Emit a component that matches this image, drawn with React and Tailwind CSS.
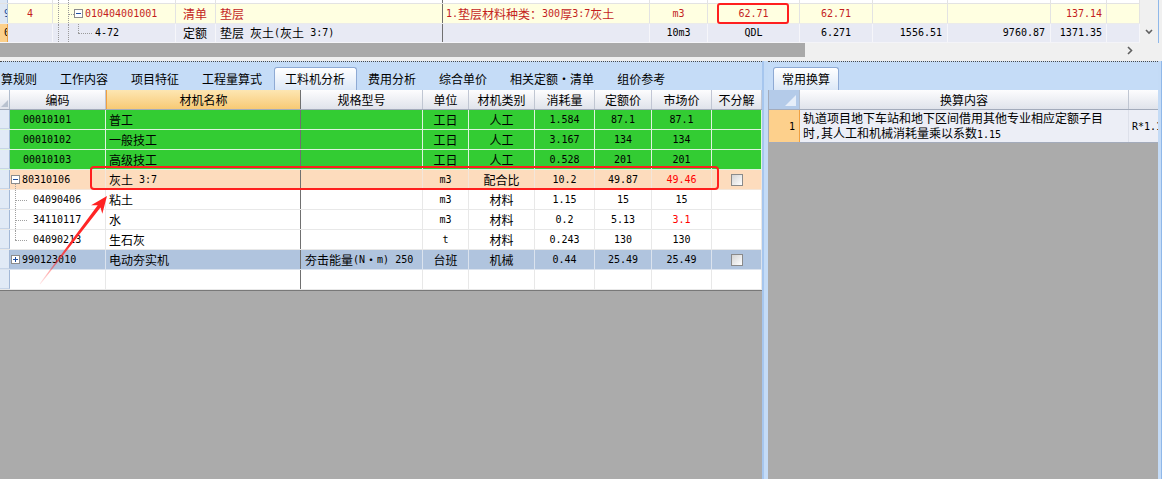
import React from "react";

const CN = "font-['Noto_Sans_CJK_SC',sans-serif] text-[12px]";
const MONO = "font-['DejaVu_Sans_Mono',monospace] text-[10px]";

function Mix({ text }) {
  const parts = text.split(/([\x20-\x7e]+)/).filter(Boolean);
  return parts.map((p, i) =>
    /^[\x20-\x7e]+$/.test(p) ? (
      <span key={i} className="font-['DejaVu_Sans_Mono',monospace] text-[10px] whitespace-pre">
        {p}
      </span>
    ) : (
      <span key={i} className="font-['Noto_Sans_CJK_SC',sans-serif] text-[12px]">
        {p}
      </span>
    )
  );
}

function C({ w, line = "border-[#e3e3e3]", className = "", children }) {
  return (
    <div
      className={`${w} ${line} ${className} shrink-0 h-full border-r flex items-center overflow-hidden whitespace-nowrap leading-none`}
    >
      {children}
    </div>
  );
}

function Box({ plus }) {
  return (
    <span className="relative inline-block shrink-0 w-[9px] h-[9px] border border-[#8c8c8c] bg-white">
      <span className="absolute left-[1px] right-[1px] top-[3px] h-[1px] bg-[#1f4f9f]" />
      {plus && <span className="absolute top-[1px] bottom-[1px] left-[3px] w-[1px] bg-[#1f4f9f]" />}
    </span>
  );
}

function Guides() {
  return (
    <>
      <span className="absolute left-[5px] top-0 bottom-0 border-l border-dotted border-[#9a9a9a]" />
      <span className="absolute left-[15px] top-0 bottom-0 border-l border-dotted border-[#9a9a9a]" />
    </>
  );
}

function Check() {
  return (
    <span className="inline-block w-[12px] h-[12px] border border-[#8a8a8a] bg-linear-to-br from-[#d4d4d4] to-white" />
  );
}

function TopGrid() {
  const red = "text-[#c41e1e]";
  return (
    <div className="h-[57px] flex flex-col">
      <div className="flex h-[43px]">
        <div className="w-[1140px] flex flex-col">
          {/* partial row above */}
          <div className="flex h-[4px] bg-white border-b border-[#e3e3e3]">
            <C w="w-[8px]" line="border-[#a9bfdc]" className="bg-[#dde7f4]" />
            <C w="w-[45px]" />
            <C w="w-[123px]" className="relative"><Guides /></C>
            <C w="w-[40px]" />
            <C w="w-[227px]" line="border-[#707070]" />
            <C w="w-[207px]" />
            <C w="w-[58px]" />
            <C w="w-[92px]" />
            <C w="w-[73px]" />
            <C w="w-[75px]" />
            <C w="w-[103px]" />
            <C w="w-[56px]" />
            <C w="w-[33px]" />
          </div>
          {/* 清单 row */}
          <div className="flex h-[20px] bg-[#ffffe1] border-b border-[#ebebeb]">
            <C w="w-[8px]" line="border-[#a9bfdc]" className={`bg-[#dde7f4] justify-end ${MONO} text-[#1a4f9a]`}>
              <span className="-mr-[3px]">9</span>
            </C>
            <C w="w-[45px]" className={`justify-center ${MONO} ${red}`}>4</C>
            <C w="w-[123px]" className="relative pl-[21px]">
              <Guides />
              <span className="absolute left-[15px] top-1/2 w-[6px] border-t border-dotted border-[#9a9a9a]" />
              <Box />
              <span className={`ml-[2px] ${MONO} ${red}`}>010404001001</span>
            </C>
            <C w="w-[40px]" className={`pl-[7px] ${CN} ${red}`}>清单</C>
            <C w="w-[227px]" line="border-[#707070]" className={`pl-[4px] ${CN} ${red}`}>垫层</C>
            <C w="w-[207px]" className={`pl-[3px] ${red}`}><Mix text="1.垫层材料种类：300厚3:7灰土" /></C>
            <C w="w-[58px]" className={`justify-center ${MONO} ${red}`}>m3</C>
            <C w="w-[92px]" className={`justify-center ${MONO} ${red}`}>62.71</C>
            <C w="w-[73px]" className={`justify-center ${MONO} ${red}`}>62.71</C>
            <C w="w-[75px]" />
            <C w="w-[103px]" />
            <C w="w-[56px]" className={`justify-end pr-[4px] ${MONO} ${red}`}>137.14</C>
            <C w="w-[33px]" />
          </div>
          {/* 定额 row */}
          <div className="flex h-[19px] bg-[#e8eaf4] border-b border-[#f4f4f8]">
            <C w="w-[8px]" line="border-[#e9a24a]" className={`bg-[#fcd08a] justify-end ${MONO}`}>
              <span className="-mr-[3px]">0</span>
            </C>
            <C w="w-[45px]" line="border-[#f6f6fa]" />
            <C w="w-[123px]" line="border-[#f6f6fa]" className="relative pl-[42px]">
              <Guides />
              <span className="absolute left-[25px] top-0 h-1/2 border-l border-dotted border-[#9a9a9a]" />
              <span className="absolute left-[25px] top-1/2 w-[14px] border-t border-dotted border-[#9a9a9a]" />
              <span className={MONO}>4-72</span>
            </C>
            <C w="w-[40px]" line="border-[#f6f6fa]" className={`pl-[7px] ${CN}`}>定额</C>
            <C w="w-[227px]" line="border-[#707070]" className="pl-[4px]"><Mix text="垫层 灰土(灰土 3:7)" /></C>
            <C w="w-[207px]" line="border-[#f6f6fa]" />
            <C w="w-[58px]" line="border-[#f6f6fa]" className={`justify-center ${MONO}`}>10m3</C>
            <C w="w-[92px]" line="border-[#f6f6fa]" className={`justify-center ${MONO}`}>QDL</C>
            <C w="w-[73px]" line="border-[#f6f6fa]" className={`justify-center ${MONO}`}>6.271</C>
            <C w="w-[75px]" line="border-[#f6f6fa]" className={`justify-end pr-[5px] ${MONO}`}>1556.51</C>
            <C w="w-[103px]" line="border-[#f6f6fa]" className={`justify-end pr-[5px] ${MONO}`}>9760.87</C>
            <C w="w-[56px]" line="border-[#f6f6fa]" className={`justify-end pr-[4px] ${MONO}`}>1371.35</C>
            <C w="w-[33px]" line="border-[#f6f6fa]" />
          </div>
        </div>
        <div className="w-[18px] bg-[#f0f0f0] flex items-end justify-center pb-[8px]">
          <svg width="8" height="6" viewBox="0 0 8 6">
            <path d="M1 1 L4 4 L7 1" fill="none" stroke="#606060" strokeWidth="1.6" />
          </svg>
        </div>
        <div className="w-[4px] bg-[#f0f0f0] border-l border-[#8fb8ea]" />
      </div>
      <div className="flex h-[14px]">
        <div className="w-[805px] bg-[#a9a9a9]" />
        <div className="w-[335px] bg-[#f0f0f0] flex items-center justify-end pr-[7px]">
          <svg width="6" height="9" viewBox="0 0 6 9">
            <path d="M1 1 L4.5 4.5 L1 8" fill="none" stroke="#606060" strokeWidth="1.6" />
          </svg>
        </div>
        <div className="w-[22px] bg-[#f0f0f0]" />
      </div>
    </div>
  );
}

const tabs = ["算规则", "工作内容", "项目特征", "工程量算式", "工料机分析", "费用分析", "综合单价", "相关定额·清单", "组价参考"];

const lw = ["w-[10px]", "w-[96px]", "w-[195px]", "w-[122px]", "w-[46px]", "w-[66px]", "w-[60px]", "w-[57px]", "w-[60px]", "w-[50px]"];

const rows = [
  { code: "00010101", name: "普工", unit: "工日", cat: "人工", qty: "1.584", price: "87.1", market: "87.1", bg: "green" },
  { code: "00010102", name: "一般技工", unit: "工日", cat: "人工", qty: "3.167", price: "134", market: "134", bg: "green" },
  { code: "00010103", name: "高级技工", unit: "工日", cat: "人工", qty: "0.528", price: "201", market: "201", bg: "green" },
  { code: "80310106", name: "灰土 3:7", unit: "m3", cat: "配合比", qty: "10.2", price: "49.87", market: "49.46", red: true, bg: "peach", tree: "minus", check: true },
  { code: "04090406", name: "粘土", unit: "m3", cat: "材料", qty: "1.15", price: "15", market: "15", bg: "white", tree: "child" },
  { code: "34110117", name: "水", unit: "m3", cat: "材料", qty: "0.2", price: "5.13", market: "3.1", red: true, bg: "white", tree: "child" },
  { code: "04090213", name: "生石灰", unit: "t", cat: "材料", qty: "0.243", price: "130", market: "130", bg: "white", tree: "last" },
  { code: "990123010", name: "电动夯实机", spec: "夯击能量(N·m) 250", unit: "台班", cat: "机械", qty: "0.44", price: "25.49", market: "25.49", bg: "steel", tree: "plus", check: true },
  { code: "", name: "", unit: "", cat: "", qty: "", price: "", market: "", bg: "white" },
];

const bgs = { green: "bg-[#33cc33]", peach: "bg-[#fddcbd]", steel: "bg-[#b0c4de]", white: "bg-white" };
const lines = { green: "border-[#dff3df]", peach: "border-[#f3e6da]", steel: "border-[#dbe3ee]", white: "border-[#e8e8e8]" };

function MatRow({ r }) {
  const line = lines[r.bg];
  return (
    <div className={`flex h-[20px] ${bgs[r.bg]} border-b ${line}`}>
      <C w={lw[0]} line="border-[#a3b8d6]" className="bg-[#e1eaf6] border-b border-b-[#c6d4e8]" />
      <C w={lw[1]} line={line} className={`relative ${MONO} ${r.tree === "child" || r.tree === "last" ? "pl-[23px]" : r.tree ? "pl-[1px]" : "pl-[13px]"}`}>
        {(r.tree === "child" || r.tree === "last") && (
          <>
            <span className={`absolute left-[5px] top-0 border-l border-dotted border-[#a0a0a0] ${r.tree === "last" ? "h-1/2" : "h-full"}`} />
            <span className="absolute left-[5px] top-1/2 w-[12px] border-t border-dotted border-[#a0a0a0]" />
          </>
        )}
        {r.tree === "minus" && <span className="absolute left-[5px] top-[14px] bottom-0 border-l border-dotted border-[#a0a0a0]" />}
        {r.tree === "minus" && <Box />}
        {r.tree === "plus" && <Box plus />}
        <span className={r.tree === "minus" || r.tree === "plus" ? "ml-[2px]" : ""}>{r.code}</span>
      </C>
      <C w={lw[2]} line="border-[#707070]" className="pl-[3px]">
        <Mix text={r.name} />
      </C>
      <C w={lw[3]} line={line} className="pl-[4px]">
        {r.spec && <Mix text={r.spec} />}
      </C>
      <C w={lw[4]} line={line} className="justify-center">
        <Mix text={r.unit} />
      </C>
      <C w={lw[5]} line={line} className={`justify-center ${CN}`}>{r.cat}</C>
      <C w={lw[6]} line={line} className={`justify-center ${MONO}`}>{r.qty}</C>
      <C w={lw[7]} line={line} className={`justify-center ${MONO}`}>{r.price}</C>
      <C w={lw[8]} line={line} className={`justify-center ${MONO} ${r.red ? "text-[#ff0000]" : ""}`}>{r.market}</C>
      <C w={lw[9]} line={line} className="justify-center">{r.check && <Check />}</C>
    </div>
  );
}

function LeftPanel() {
  const heads = ["编码", "材机名称", "规格型号", "单位", "材机类别", "消耗量", "定额价", "市场价", "不分解"];
  return (
    <div className="w-[762px] flex flex-col bg-[#ababab]">
      <div className="h-[29px] border-t border-dotted border-[#4a4a4a] bg-[#c5dcf7] flex items-end">
        {tabs.map((t, i) => (
          <div
            key={t}
            className={`h-[23px] flex items-center border border-b-0 rounded-t-[3px] ${CN} ${i === 0 ? "pl-0 pr-[10.5px]" : "px-[10.5px]"} ${
              i === 4 ? "border-[#8eaad4] bg-linear-to-b from-white to-[#dce8f7]" : "border-transparent"
            }`}
          >
            {t}
          </div>
        ))}
      </div>
      <div className="flex h-[20px] bg-linear-to-b from-[#fdfdfe] to-[#e0e3eb] border-b border-[#a3abbb]">
        <div className="w-[10px] shrink-0 h-full border-r border-[#b0bccd] relative">
          <svg className="absolute left-[1px] bottom-[2px]" width="7" height="7" viewBox="0 0 7 7">
            <path d="M7 0 L7 7 L0 7 Z" fill="#b9c2cf" />
          </svg>
        </div>
        {heads.map((h, i) => (
          <div
            key={h}
            className={`${lw[i + 1]} shrink-0 h-full border-r flex items-center justify-center ${CN} ${
              i === 1
                ? "bg-linear-to-b from-[#fde6b2] to-[#f8ca74] border-l border-l-[#f0a040] border-[#707070]"
                : "border-[#c0c6d2]"
            }`}
          >
            {h}
          </div>
        ))}
      </div>
      {rows.map((r, i) => (
        <MatRow key={i} r={r} />
      ))}
      <div className="h-[1px] bg-[#787878]" />
    </div>
  );
}

function RightPanel() {
  return (
    <div className="w-[390px] flex flex-col bg-[#ababab]">
      <div className="h-[29px] border-t border-dotted border-[#4a4a4a] bg-[#c5dcf7] flex items-end pl-[5px]">
        <div className={`h-[23px] px-[8px] flex items-center border border-b-0 rounded-t-[3px] border-[#8eaad4] bg-linear-to-b from-white to-[#dce8f7] ${CN}`}>
          常用换算
        </div>
      </div>
      <div className="flex h-[20px] bg-linear-to-b from-[#fdfdfe] to-[#e0e3eb] border-b border-l border-[#a3abbb]">
        <div className="w-[31px] shrink-0 h-full border-r border-[#b0bccd] bg-[#b4cbe9] relative">
          <svg className="absolute right-[3px] bottom-[3px]" width="11" height="11" viewBox="0 0 11 11">
            <path d="M11 0 L11 11 L0 11 Z" fill="#e6eef9" />
          </svg>
        </div>
        <div className={`w-[329px] shrink-0 h-full border-r border-[#c0c6d2] flex items-center justify-center ${CN}`}>换算内容</div>
        <div className="w-[29px] shrink-0 h-full" />
      </div>
      <div className="flex h-[33px] bg-[#eceef6] border-b border-l border-[#a3abbb]">
        <div className={`w-[31px] shrink-0 h-full bg-[#fdd08c] border-r border-[#f0a040] flex items-center justify-end pr-[4px] ${MONO}`}>
          1
        </div>
        <div className="w-[329px] shrink-0 h-full border-r border-[#dde0ea] flex flex-col justify-center pl-[3px] leading-[14px] overflow-hidden whitespace-nowrap">
          <div><Mix text="轨道项目地下车站和地下区间借用其他专业相应定额子目" /></div>
          <div><Mix text="时,其人工和机械消耗量乘以系数1.15" /></div>
        </div>
        <div className={`w-[29px] shrink-0 h-full flex items-center pl-[3px] overflow-hidden whitespace-nowrap ${MONO}`}>
          R*1.15
        </div>
      </div>
    </div>
  );
}

function Annotations() {
  return (
    <>
      <div className="absolute left-[717px] top-[3px] w-[72px] h-[21px] border-2 border-[#ff1f1f] rounded-[3px]" />
      <div className="absolute left-[90px] top-[166px] w-[629px] h-[24px] border-[2.5px] border-[#ff1f1f] rounded-[4px]" />
      <svg className="absolute left-0 top-0 pointer-events-none" width="1162" height="479">
        <defs>
          <linearGradient id="ag" x1="40" y1="284" x2="107" y2="196" gradientUnits="userSpaceOnUse">
            <stop offset="0" stopColor="#ff2a2a" stopOpacity="0.1" />
            <stop offset="0.45" stopColor="#ff2a2a" />
            <stop offset="1" stopColor="#ff2020" />
          </linearGradient>
        </defs>
        <polygon
          points="39.6,283.7 40.4,284.3 100.5,207.4 102.3,213.7 107,196 91.1,205.3 97.7,205.2"
          fill="url(#ag)"
        />
      </svg>
    </>
  );
}

export default function App() {
  return (
    <div className="relative w-[1162px] h-[479px] overflow-hidden bg-[#f0f0f0] text-black">
      <TopGrid />
      <div className="h-[4px]" />
      <div className="flex h-[418px]">
        <LeftPanel />
        <div className="w-[6px] shrink-0 bg-[#c4dbf6] border-l-2 border-[#a6c6ee]" />
        <RightPanel />
        <div className="w-[4px] shrink-0 bg-[#c4dbf6] border-r border-[#8fb8ea]" />
      </div>
      <Annotations />
    </div>
  );
}
